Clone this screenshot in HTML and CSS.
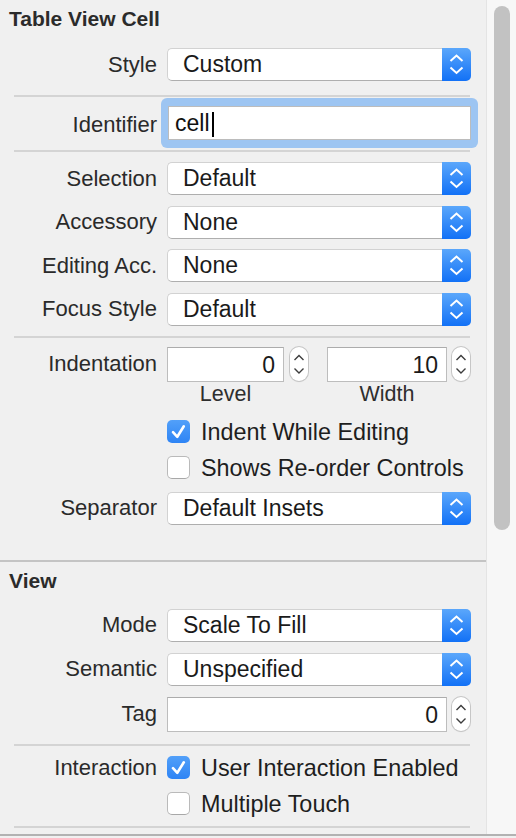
FILE: index.html
```html
<!DOCTYPE html>
<html lang="en">
<head>
<meta charset="utf-8">
<title>Table View Cell Inspector</title>
<link rel="stylesheet" href="styles.css">
</head>
<body>
<div class="window">
  <div class="main">
    <div class="inspector">
      <section class="sec sec-cell">
        <h2 class="sec-title">Table View Cell</h2>

        <div class="row r-style">
          <span class="lbl">Style</span>
          <div class="popup"><span class="popup-text">Custom</span><span class="popup-arrow"><svg viewBox="0 0 29 33" width="29" height="33"><path d="M8.5 13 L14.5 7.5 L20.5 13 M8.5 19.5 L14.5 25 L20.5 19.5"/></svg></span></div>
        </div>
        <div class="sep s1"></div>

        <div class="row r-ident">
          <span class="lbl lbl-ident">Identifier</span>
          <div class="ring"><div class="field-text">cell<span class="caret"></span></div></div>
        </div>
        <div class="sep s2"></div>

        <div class="row r-selection">
          <span class="lbl">Selection</span>
          <div class="popup"><span class="popup-text">Default</span><span class="popup-arrow"><svg viewBox="0 0 29 33" width="29" height="33"><path d="M8.5 13 L14.5 7.5 L20.5 13 M8.5 19.5 L14.5 25 L20.5 19.5"/></svg></span></div>
        </div>
        <div class="row r-next">
          <span class="lbl">Accessory</span>
          <div class="popup"><span class="popup-text">None</span><span class="popup-arrow"><svg viewBox="0 0 29 33" width="29" height="33"><path d="M8.5 13 L14.5 7.5 L20.5 13 M8.5 19.5 L14.5 25 L20.5 19.5"/></svg></span></div>
        </div>
        <div class="row r-next">
          <span class="lbl">Editing Acc.</span>
          <div class="popup"><span class="popup-text">None</span><span class="popup-arrow"><svg viewBox="0 0 29 33" width="29" height="33"><path d="M8.5 13 L14.5 7.5 L20.5 13 M8.5 19.5 L14.5 25 L20.5 19.5"/></svg></span></div>
        </div>
        <div class="row r-next">
          <span class="lbl">Focus Style</span>
          <div class="popup"><span class="popup-text">Default</span><span class="popup-arrow"><svg viewBox="0 0 29 33" width="29" height="33"><path d="M8.5 13 L14.5 7.5 L20.5 13 M8.5 19.5 L14.5 25 L20.5 19.5"/></svg></span></div>
        </div>
        <div class="sep s3"></div>

        <div class="row r-indent">
          <span class="lbl">Indentation</span>
          <div class="numbers">
            <div class="num w-level">0</div>
            <div class="stepper"><svg viewBox="0 0 18 34" width="18" height="34"><path d="M4.5 13 L9 8.5 L13.5 13 M4.5 21.5 L9 26 L13.5 21.5"/></svg></div>
            <div class="num w-width">10</div>
            <div class="stepper st2"><svg viewBox="0 0 18 34" width="18" height="34"><path d="M4.5 13 L9 8.5 L13.5 13 M4.5 21.5 L9 26 L13.5 21.5"/></svg></div>
          </div>
        </div>
        <div class="row r-sublabels">
          <span class="lbl"></span>
          <div class="sublabels">
            <span class="sub w-level">Level</span>
            <span class="sub w-width">Width</span>
          </div>
        </div>

        <div class="row r-check c-first">
          <span class="lbl"></span>
          <div class="check"><span class="box on"><svg viewBox="0 0 23 23" width="23" height="23"><path d="M6 12.2 L10.3 16.8 L16.8 6.3"/></svg></span><span class="check-text">Indent While Editing</span></div>
        </div>
        <div class="row r-check c-next">
          <span class="lbl"></span>
          <div class="check"><span class="box"></span><span class="check-text">Shows Re-order Controls</span></div>
        </div>

        <div class="row r-separator">
          <span class="lbl">Separator</span>
          <div class="popup"><span class="popup-text">Default Insets</span><span class="popup-arrow"><svg viewBox="0 0 29 33" width="29" height="33"><path d="M8.5 13 L14.5 7.5 L20.5 13 M8.5 19.5 L14.5 25 L20.5 19.5"/></svg></span></div>
        </div>
      </section>

      <section class="sec sec-view">
        <h2 class="sec-title">View</h2>
        <div class="row r-mode">
          <span class="lbl">Mode</span>
          <div class="popup"><span class="popup-text">Scale To Fill</span><span class="popup-arrow"><svg viewBox="0 0 29 33" width="29" height="33"><path d="M8.5 13 L14.5 7.5 L20.5 13 M8.5 19.5 L14.5 25 L20.5 19.5"/></svg></span></div>
        </div>
        <div class="row r-next2">
          <span class="lbl">Semantic</span>
          <div class="popup"><span class="popup-text">Unspecified</span><span class="popup-arrow"><svg viewBox="0 0 29 33" width="29" height="33"><path d="M8.5 13 L14.5 7.5 L20.5 13 M8.5 19.5 L14.5 25 L20.5 19.5"/></svg></span></div>
        </div>
        <div class="row r-tag">
          <span class="lbl">Tag</span>
          <div class="numbers">
            <div class="num w-tag">0</div>
            <div class="stepper st2"><svg viewBox="0 0 18 34" width="18" height="34"><path d="M4.5 13 L9 8.5 L13.5 13 M4.5 21.5 L9 26 L13.5 21.5"/></svg></div>
          </div>
        </div>
        <div class="sep s4"></div>
        <div class="row r-check c-inter">
          <span class="lbl">Interaction</span>
          <div class="check"><span class="box on"><svg viewBox="0 0 23 23" width="23" height="23"><path d="M6 12.2 L10.3 16.8 L16.8 6.3"/></svg></span><span class="check-text">User Interaction Enabled</span></div>
        </div>
        <div class="row r-check c-next">
          <span class="lbl"></span>
          <div class="check"><span class="box"></span><span class="check-text">Multiple Touch</span></div>
        </div>
        <div class="sep s5"></div>
      </section>
    </div>
    <div class="scrollbar"><div class="thumb"></div></div>
  </div>
  <div class="bottom-line"></div>
</div>
</body>
</html>
```

FILE: styles.css
```css
* { box-sizing: border-box; }

html, body {
  margin: 0;
  padding: 0;
  background: #f0f0f0;
}

body {
  font-family: "Liberation Sans", Arial, sans-serif;
  color: #262626;
  width: 516px;
  height: 838px;
  overflow: hidden;
}

.window {
  display: flex;
  flex-direction: column;
  height: 838px;
}

.main {
  display: flex;
  height: 834px;
  overflow: hidden;
}

.inspector {
  width: 486px;
  flex: none;
}

.scrollbar {
  flex: 1;
  background: #f7f7f7;
  border-left: 1px solid #e4e4e4;
  padding: 6px 0 0 7px;
}

.thumb {
  width: 16px;
  height: 524px;
  border-radius: 8px;
  background: #c2c2c2;
}

.bottom-line {
  height: 2px;
  background: #b2b2b2;
}

/* sections */
.sec-cell {
  padding: 7px 0 35px;
}

.sec-view {
  border-top: 2px solid #c4c4c4;
  padding: 7px 0 0;
}

.sec-title {
  margin: 0;
  padding-left: 9px;
  font-size: 21px;
  line-height: 24px;
  font-weight: bold;
  color: #2b2b2b;
}

/* rows */
.row {
  display: grid;
  grid-template-columns: 157px 304px;
  column-gap: 10px;
  align-items: center;
}

.lbl {
  text-align: right;
  font-size: 22px;
  line-height: 24px;
  color: #2a2a2a;
  white-space: nowrap;
}

.lbl-ident {
  padding-top: 3px;
}

.r-style { margin-top: 17px; }
.r-ident { margin-top: 1px; }
.r-selection { margin-top: 10px; }
.r-next { margin-top: 10.67px; }
.r-indent { margin-top: 9px; }
.r-sublabels { margin-top: 0; }
.c-first { margin-top: 14px; }
.c-next { margin-top: 12px; }
.r-separator { margin-top: 12px; }
.r-mode { margin-top: 16px; }
.r-next2 { margin-top: 11px; }
.r-tag { margin-top: 11px; }
.c-inter { margin-top: 10px; }

/* separators */
.sep {
  margin-left: 14px;
  width: 456px;
  height: 2px;
  background: #d4d4d4;
}
.s1 { margin-top: 14px; }
.s2 { margin-top: 2px; }
.s3 { margin-top: 10px; }
.s4 { margin-top: 12px; }
.s5 { margin-top: 10px; }

/* popup buttons */
.popup {
  display: flex;
  height: 33px;
}

.popup-text {
  flex: 1;
  background: #fff;
  border: 1px solid #d2d2d2;
  border-bottom-color: #aeaeae;
  border-right: 0;
  border-radius: 5px 0 0 5px;
  padding-left: 15px;
  font-size: 23px;
  line-height: 31px;
  color: #1a1a1a;
  white-space: nowrap;
}

.popup-arrow {
  width: 29px;
  height: 33px;
  border-radius: 0 5px 5px 0;
  background: linear-gradient(#5ba7fb, #1271f6);
}

.popup-arrow svg {
  display: block;
  fill: none;
  stroke: #fff;
  stroke-width: 2;
}

/* identifier field with focus ring */
.ring {
  margin-left: -6px;
  margin-right: -7px;
  padding: 8px 7px;
  border-radius: 6px;
  background: #9dc5f2;
}

.field-text {
  height: 34px;
  background: #fff;
  border: 1px solid #bcbcbc;
  padding-left: 6px;
  font-size: 23px;
  line-height: 32px;
  color: #111;
}

.caret {
  display: inline-block;
  width: 2px;
  height: 25px;
  margin-left: 2px;
  background: #000;
  vertical-align: -6px;
}

/* number fields */
.numbers {
  display: flex;
  align-items: flex-start;
}

.num {
  height: 35px;
  background: #fff;
  border: 1px solid #bdbdbd;
  border-top-color: #acacac;
  padding: 3px 8px 0 0;
  text-align: right;
  font-size: 23px;
  line-height: 29px;
  color: #1a1a1a;
}

.w-level { width: 117px; }
.w-width { width: 120px; }
.w-tag { width: 280px; }

.stepper {
  width: 18px;
  height: 34px;
  margin-left: 6px;
  margin-right: 19px;
  background: #fff;
  border-radius: 9px;
  box-shadow: 0 0 0 1px #c6c6c6, 0 1px 1px rgba(0, 0, 0, 0.15);
}

.stepper.st2 {
  margin-left: 5px;
  margin-right: 0;
}

.stepper svg {
  display: block;
  fill: none;
  stroke: #3c3c3c;
  stroke-width: 1.4;
}

.sublabels {
  display: flex;
  gap: 43px;
}

.sub {
  display: block;
  text-align: center;
  font-size: 21.5px;
  line-height: 24px;
  color: #2e2e2e;
}

/* checkboxes */
.check {
  display: flex;
  align-items: center;
  gap: 11px;
  height: 24px;
}

.box {
  width: 23px;
  height: 23px;
  flex: none;
  border-radius: 5px;
  background: #fff;
  border: 1px solid #bababa;
  border-bottom-color: #a8a8a8;
}

.box.on {
  border: 0;
  background: linear-gradient(#52a0f9, #2e84f5);
}

.box svg {
  display: block;
  fill: none;
  stroke: #fff;
  stroke-width: 2.6;
  stroke-linecap: round;
  stroke-linejoin: round;
}

.check-text {
  font-size: 23.4px;
  line-height: 24px;
  color: #1e1e1e;
  white-space: nowrap;
}
```
